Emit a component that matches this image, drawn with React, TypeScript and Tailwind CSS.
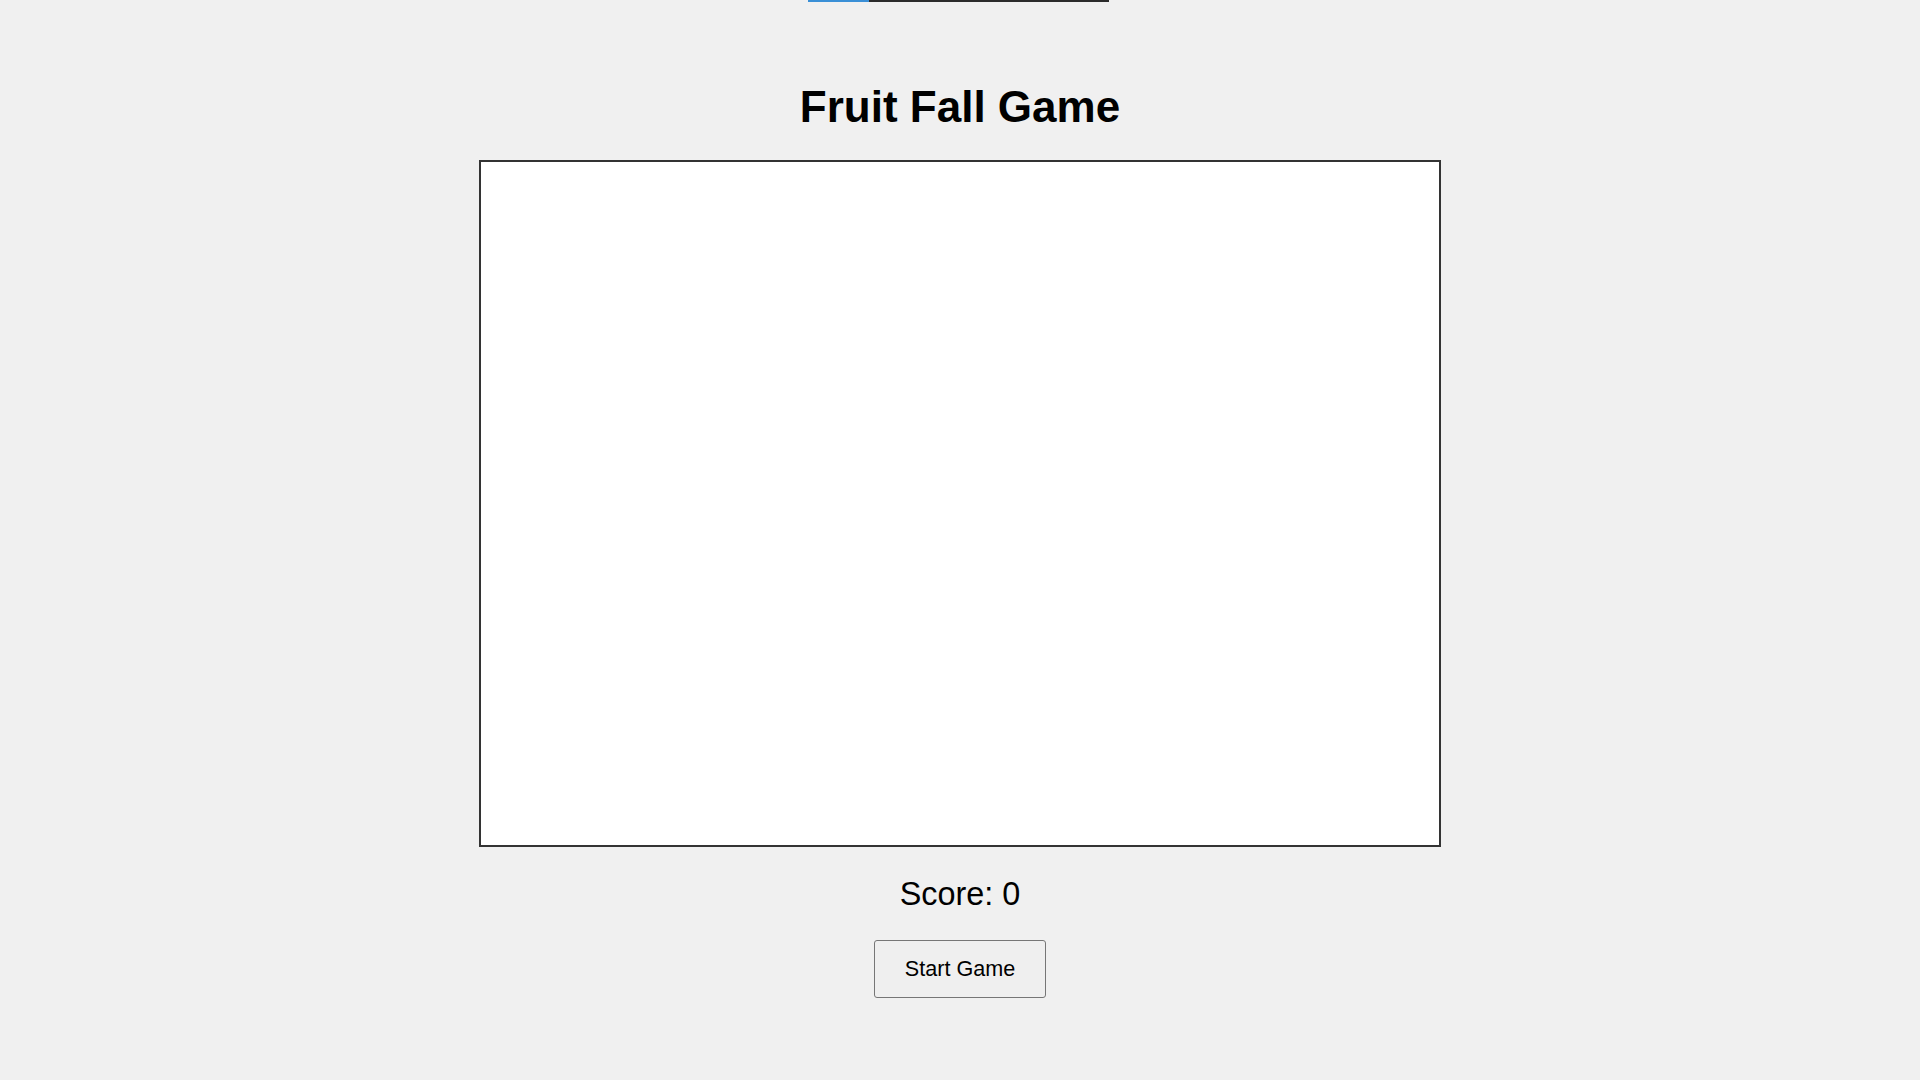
import React from "react";

export default function App() {
  return (
    <div
      className="min-h-screen w-full bg-[#f0f0f0] flex flex-col items-center text-black"
      style={{ fontFamily: '"Liberation Sans", Arial, sans-serif' }}
    >
      <div className="h-[2px] w-[301px] flex -ml-[3px]">
        <div className="h-full w-[61px] bg-[#3a8fd6]" />
        <div className="h-full flex-1 bg-[#2b2b2b]" />
      </div>
      <h1 className="mt-[80px] text-[44px] leading-[50px] font-bold">Fruit Fall Game</h1>
      <div className="mt-[28px] w-[962px] h-[687px] border-2 border-[#333] bg-white" />
      <div className="mt-[27px] text-[32.4px] leading-[40px]">Score: 0</div>
      <button
        className="mt-[26px] h-[58px] w-[172px] border border-[#767676] rounded-[3px] bg-[#efefef] text-[21.6px] text-black flex items-center justify-center"
        style={{ fontFamily: '"Liberation Sans", Arial, sans-serif' }}
      >
        Start Game
      </button>
    </div>
  );
}
